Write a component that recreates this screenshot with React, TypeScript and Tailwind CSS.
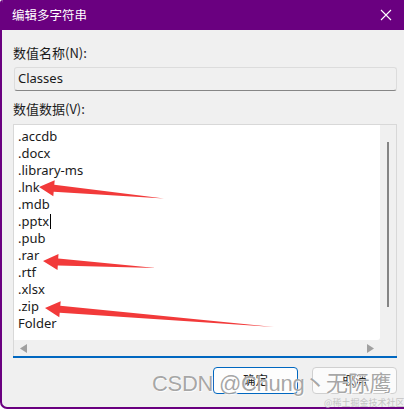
import React from "react";

const items = [
  ".accdb",
  ".docx",
  ".library-ms",
  ".lnk",
  ".mdb",
  ".pptx",
  ".pub",
  ".rar",
  ".rtf",
  ".xlsx",
  ".zip",
  "Folder",
];

const ui = { fontFamily: '"Noto Sans", "Noto Sans CJK SC", sans-serif' };
const cjk = { fontFamily: '"Noto Sans CJK SC", "Noto Sans", sans-serif' };

function Arrow({ points }: { points: string }) {
  return <polygon points={points} fill="#f23a3a" />;
}

export default function App() {
  return (
    <div className="relative w-[404px] h-[409px] bg-white overflow-hidden">
      <div className="flex flex-col w-[404px] h-[409px] bg-[#f0f0f0] border-l-[2px] border-b-[2px] border-[#6a0080] rounded-bl-[7px] rounded-tl-[3px] overflow-hidden">
        {/* title bar */}
        <div className="h-[30px] shrink-0 bg-[#6a0080] -ml-[2px] flex items-center justify-between pl-[12px] pr-[6px]">
          <span className="text-white text-[12.5px] leading-none" style={cjk}>
            编辑多字符串
          </span>
          <svg width="12" height="12" viewBox="0 0 12 12" className="mr-[6px]">
            <path d="M1 1 L11 11 M11 1 L1 11" stroke="#ffffff" strokeWidth="1.1" />
          </svg>
        </div>

        {/* body */}
        <div className="flex flex-col pl-[11px] pr-[7px] pt-[14px]">
          <div className="text-[13px] leading-[17px] text-[#1a1a1a]" style={cjk}>
            数值名称(N):
          </div>
          <div className="mt-[6px] ml-[1px] h-[24px] rounded-[3px] border border-[#dcdcdc] border-b-[#868686] bg-[#f0f0f0] flex items-center pl-[3px]">
            <span className="text-[13px] text-[#1a1a1a]" style={ui}>
              Classes
            </span>
          </div>
          <div className="mt-[9px] text-[13px] leading-[17px] text-[#1a1a1a]" style={cjk}>
            数值数据(V):
          </div>

          {/* multi-line edit box */}
          <div className="mt-[7px] h-[234px] flex flex-col border-t border-l border-r border-[#d8d8d8] bg-[#f0f0f0]">
            <div className="flex flex-1 min-h-0">
              <div className="flex-1 bg-white rounded-br-[3px] pl-[4px] pt-[3px]">
                {items.map((t) => (
                  <div
                    key={t}
                    className="relative text-[13px] leading-[17px] text-[#1a1a1a] h-[17px]"
                    style={ui}
                  >
                    {t}
                    {t === ".pptx" && (
                      <span className="inline-block align-middle w-[1px] h-[15px] bg-black ml-[1px] -mt-[2px]" />
                    )}
                  </div>
                ))}
              </div>
              <div className="w-[16px] flex justify-center pt-[17px]">
                <div className="w-[2px] h-[165px] bg-[#858585]" />
              </div>
            </div>
            <div className="h-[16px] shrink-0 flex items-center justify-between pl-[6px] pr-[22px]">
              <svg width="7" height="9" viewBox="0 0 7 9">
                <path d="M7 0 L0 4.5 L7 9 Z" fill="#a0a0a0" />
              </svg>
              <svg width="7" height="9" viewBox="0 0 7 9">
                <path d="M0 0 L7 4.5 L0 9 Z" fill="#a0a0a0" />
              </svg>
            </div>
            <div className="h-[2px] shrink-0 bg-[#0067c0] -mx-[1px]" />
          </div>

          {/* buttons */}
          <div className="mt-[9px] flex justify-end gap-[14px]">
            <button className="w-[85px] h-[27px] rounded-[4px] border border-[#0067c0] bg-[#fdfdfd] text-[12.5px] text-[#1a1a1a]" style={cjk}>
              确定
            </button>
            <button className="w-[85px] h-[27px] rounded-[4px] border border-[#d0d0d0] bg-[#fbfbfb] text-[12.5px] text-[#1a1a1a]" style={cjk}>
              取消
            </button>
          </div>
        </div>
      </div>

      {/* red annotation arrows */}
      <svg className="absolute left-0 top-0 pointer-events-none" width="404" height="409">
        <Arrow points="39,187 54.7,180.3 54.3,184.8 164,198.5 53.7,191.8 53.3,196.3" />
        <Arrow points="43,261 58.5,254 58.2,258.5 156,268 57.8,265.5 57.5,270" />
        <Arrow points="45,308 60.7,301.2 60.3,305.7 274,327 59.7,312.7 59.3,317.2" />
      </svg>

      {/* watermarks */}
      <div
        className="absolute left-[152px] top-[370px] text-[22px] leading-[28px] text-[rgba(90,90,90,0.55)] whitespace-nowrap pointer-events-none tracking-[-0.3px]"
        style={{
          fontFamily: '"Liberation Sans", "Noto Sans CJK SC", sans-serif',
          textShadow: "0 0 1px #ffffff, 1px 1px 0 rgba(255,255,255,0.8)",
        }}
      >
        CSDN @Chung丶无际鹰
      </div>
      <div
        className="absolute left-[324px] top-[397px] text-[9px] leading-[11px] text-[#c4c4c4] whitespace-nowrap pointer-events-none"
        style={cjk}
      >
        @稀土掘金技术社区
      </div>
    </div>
  );
}
